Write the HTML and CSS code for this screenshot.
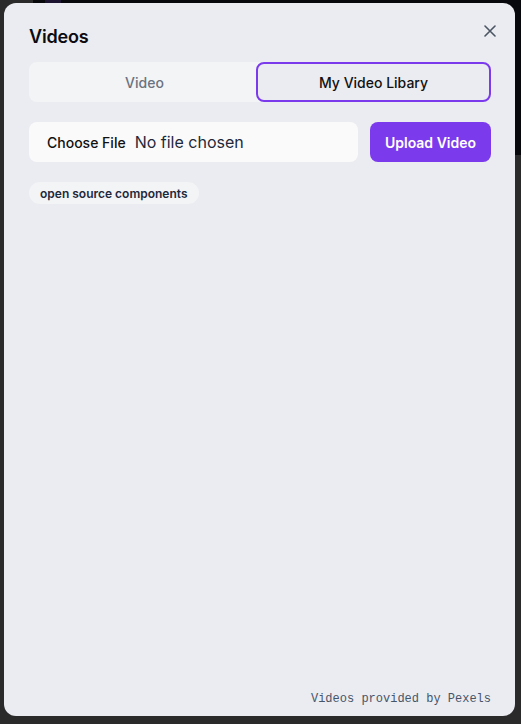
FILE: index.html
```html
<!DOCTYPE html>
<html>
<head>
<meta charset="utf-8">
<link rel="stylesheet" href="styles.css">
</head>
<body>
<div class="scene"><div class="scene-accent"></div></div>
<div class="modal">
  <button class="close" aria-label="Close">
    <svg width="12" height="12" viewBox="0 0 12 12"><path d="M1 1 L11 11 M11 1 L1 11" stroke="#4b5563" stroke-width="1.6" stroke-linecap="round" fill="none"/></svg>
  </button>
  <h2 class="title">Videos</h2>
  <div class="tabs">
    <div class="tab">Video</div>
    <div class="tab tab-active">My Video Libary</div>
  </div>
  <div class="upload-row">
    <label class="file-input"><span class="file-btn">Choose File</span><span class="file-name">No file chosen</span></label>
    <button class="upload-btn">Upload Video</button>
  </div>
  <div class="tags"><span class="pill">open source components</span></div>
  <div class="footer">Videos provided by Pexels</div>
</div>
</body>
</html>
```
FILE: styles.css
```css
* { box-sizing: border-box; }
html, body { margin: 0; padding: 0; }
body {
  width: 521px;
  height: 724px;
  background: #2a2a2a;
  font-family: Inter, "Liberation Sans", sans-serif;
  position: relative;
  overflow: hidden;
}
.scene {
  position: absolute;
  left: 33px;
  top: 0;
  right: 0;
  height: 155px;
  background: #07080c;
}
.scene-accent {
  position: absolute;
  left: 12px;
  top: 0;
  width: 16px;
  height: 4px;
  background: #1c1430;
}
.modal {
  position: relative;
  margin: 3px 0 0 4px;
  width: 511px;
  height: 713px;
  background: #ebecf1;
  border-radius: 12px;
  padding: 20px 24px 9px 25px;
  display: flex;
  flex-direction: column;
}
.close {
  position: absolute;
  top: 22px;
  right: 19px;
  border: 0;
  background: none;
  padding: 0;
  width: 12px;
  height: 12px;
  display: flex;
}
.title {
  margin: 0;
  font-size: 18px;
  line-height: 28px;
  font-weight: 600;
  color: #0b0b12;
  letter-spacing: -0.2px;
}
.tabs {
  margin-top: 11px;
  height: 40px;
  display: grid;
  grid-template-columns: 1fr 1fr;
  background: #f3f4f6;
  border-radius: 8px;
}
.tab {
  display: flex;
  align-items: center;
  justify-content: center;
  font-size: 14px;
  font-weight: 500;
  color: #6b7280;
}
.tab-active {
  margin-left: -4px;
  background: #ebecf1;
  border: 2px solid #7c3aed;
  border-radius: 8px;
  color: #111111;
}
.upload-row {
  margin-top: 20px;
  display: flex;
  gap: 12px;
  height: 40px;
}
.file-input {
  flex: 1;
  background: #fafafa;
  border-radius: 8px;
  display: flex;
  align-items: center;
  padding-left: 18px;
}
.file-btn {
  font-size: 14px;
  font-weight: 500;
  color: #111111;
  margin-right: 9px;
}
.file-name {
  font-size: 16px;
  color: #1e293b;
}
.upload-btn {
  width: 121px;
  border: 0;
  border-radius: 8px;
  background: #7c3aed;
  color: #ffffff;
  font-family: inherit;
  font-size: 14px;
  font-weight: 600;
  padding: 0;
}
.tags {
  margin-top: 20px;
  display: flex;
}
.pill {
  background: #f3f4f6;
  border-radius: 999px;
  padding: 0 11px;
  height: 22px;
  display: flex;
  align-items: center;
  font-size: 12px;
  font-weight: 600;
  color: #1e293b;
}
.footer {
  margin-top: auto;
  text-align: right;
  font-family: "Liberation Mono", "DejaVu Sans Mono", monospace;
  font-size: 12px;
  line-height: 16px;
  color: #475569;
}
```
